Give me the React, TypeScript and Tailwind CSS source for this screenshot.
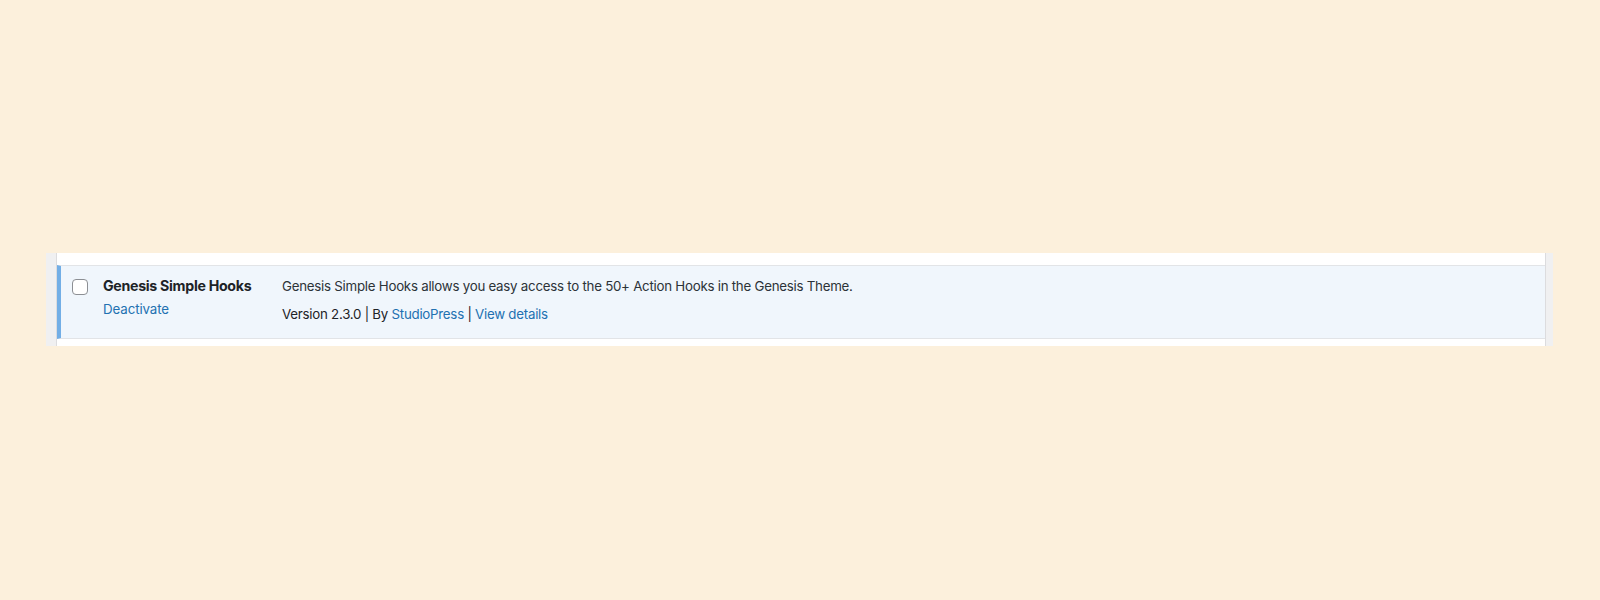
export default function App() {
  return (
    <div className="h-[600px] bg-[#fcf0dc] pt-[253px] font-['Inter',sans-serif]">
      <div className="ml-[46px] w-[1507px] h-[93px] bg-[#f0f0f1] pl-[10px] pr-[7px]">
        <div className="h-full border-x border-[#dcdcde] bg-white pt-[12px]">
          <div className="flex h-[74px] border-y border-[#e2e4e7] border-l-4 border-l-[#72aee6] bg-[#f0f6fc]">
            <div className="w-[42px] shrink-0 pl-[11px] pt-[13px]">
              <div className="w-[16px] h-[16px] rounded-[4px] border border-[#8c8f94] bg-white"></div>
            </div>
            <div className="w-[179px] shrink-0 pt-[10px]">
              <div className="text-[14.2px] leading-[20px] font-bold tracking-[-0.3px] text-[#1d2327]">Genesis Simple Hooks</div>
              <a className="block mt-[3px] text-[13.3px] leading-[20px] tracking-[-0.1px] text-[#2271b1]">Deactivate</a>
            </div>
            <div className="pt-[10px] text-[13.3px] leading-[20px] tracking-[-0.25px]">
              <p className="text-[#2c3338]">Genesis Simple Hooks allows you easy access to the 50+ Action Hooks in the Genesis Theme.</p>
              <p className="mt-[8px] text-[#1d2327]">
                Version 2.3.0 | By <a className="text-[#2271b1]">StudioPress</a> | <a className="text-[#2271b1]">View details</a>
              </p>
            </div>
          </div>
        </div>
      </div>
    </div>
  )
}
